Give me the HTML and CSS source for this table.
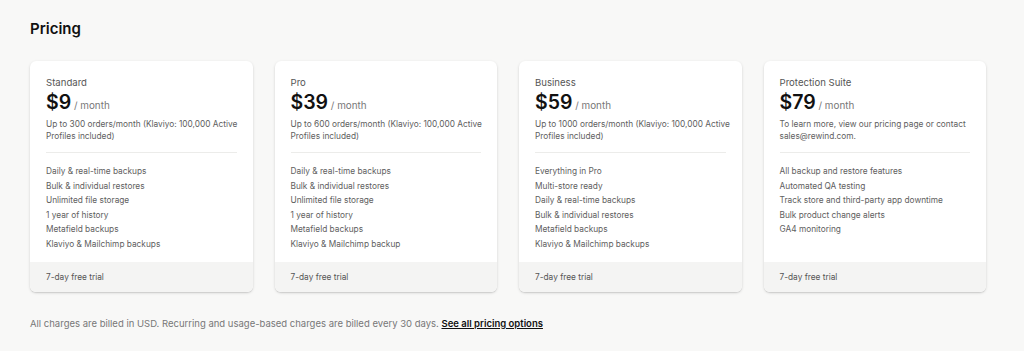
FILE: index.html
```html
<!DOCTYPE html>
<html lang="en">
<head>
    <meta charset="UTF-8">
    <title>Pricing</title>
    <link rel="stylesheet" href="styles.css">
</head>
<body>
<div class="page">
    <h1>Pricing</h1>
    <div class="plans">
        <div class="plan">
            <div class="plan-body">
                <div class="plan-name">Standard</div>
                <div class="plan-price"><strong>$9</strong> / month</div>
                <p class="plan-desc">Up to 300 orders/month (Klaviyo: 100,000 Active Profiles included)</p>
                <ul class="features">
                    <li>Daily &amp; real-time backups</li>
                    <li>Bulk &amp; individual restores</li>
                    <li>Unlimited file storage</li>
                    <li>1 year of history</li>
                    <li>Metafield backups</li>
                    <li>Klaviyo &amp; Mailchimp backups</li>
                </ul>
            </div>
            <div class="plan-foot">7-day free trial</div>
        </div>
        <div class="plan">
            <div class="plan-body">
                <div class="plan-name">Pro</div>
                <div class="plan-price"><strong>$39</strong> / month</div>
                <p class="plan-desc">Up to 600 orders/month (Klaviyo: 100,000 Active Profiles included)</p>
                <ul class="features">
                    <li>Daily &amp; real-time backups</li>
                    <li>Bulk &amp; individual restores</li>
                    <li>Unlimited file storage</li>
                    <li>1 year of history</li>
                    <li>Metafield backups</li>
                    <li>Klaviyo &amp; Mailchimp backup</li>
                </ul>
            </div>
            <div class="plan-foot">7-day free trial</div>
        </div>
        <div class="plan">
            <div class="plan-body">
                <div class="plan-name">Business</div>
                <div class="plan-price"><strong>$59</strong> / month</div>
                <p class="plan-desc">Up to 1000 orders/month (Klaviyo: 100,000 Active Profiles included)</p>
                <ul class="features">
                    <li>Everything in Pro</li>
                    <li>Multi-store ready</li>
                    <li>Daily &amp; real-time backups</li>
                    <li>Bulk &amp; individual restores</li>
                    <li>Metafield backups</li>
                    <li>Klaviyo &amp; Mailchimp backups</li>
                </ul>
            </div>
            <div class="plan-foot">7-day free trial</div>
        </div>
        <div class="plan">
            <div class="plan-body">
                <div class="plan-name">Protection Suite</div>
                <div class="plan-price"><strong>$79</strong> / month</div>
                <p class="plan-desc">To learn more, view our pricing page or contact sales@rewind.com.</p>
                <ul class="features">
                    <li>All backup and restore features</li>
                    <li>Automated QA testing</li>
                    <li>Track store and third-party app downtime</li>
                    <li>Bulk product change alerts</li>
                    <li>GA4 monitoring</li>
                </ul>
            </div>
            <div class="plan-foot">7-day free trial</div>
        </div>
    </div>
    <p class="note">
        All charges are billed in USD. Recurring and usage-based charges are billed every 30 days.
        <a href="#">See all pricing options</a>
    </p>
</div>
</body>
</html>
```

FILE: styles.css
```css
body {
  margin: 0;
  background: #f8f8f7;
  color: #1a1a1a;
  font-family: Inter, "Noto Sans", sans-serif;
}

.page {
  padding: 19px 38px 0 30px;
}

h1 {
  margin: 0 0 22px;
  font-size: 15px;
  font-weight: 600;
  line-height: 20px;
  color: #111;
}

.plans {
  display: grid;
  grid-template-columns: repeat(4, 1fr);
  gap: 22px;
}

.plan {
  display: flex;
  flex-direction: column;
  background: white;
  border-radius: 6px;
  box-shadow: rgba(0, 0, 0, 0.14) 0 1px 3px, rgba(0, 0, 0, 0.08) 0 1px 1px;
  overflow: hidden;
}

.plan-body {
  flex: 1;
  padding: 15px 16px 11px;
}

.plan-name {
  font-size: 9.6px;
  line-height: 14px;
  color: #555;
}

.plan-price {
  font-size: 9.9px;
  color: #777;
  line-height: 25px;
}

.plan-price strong {
  font-size: 19.5px;
  font-weight: 600;
  color: #111;
}

.plan-desc {
  margin: 0 -6px 0 0;
  padding-bottom: 10px;
  font-size: 8.3px;
  line-height: 12px;
  color: #606060;
}

.features {
  list-style: none;
  margin: 0;
  padding: 11px 0 0;
  border-top: 1px solid #ececea;
  font-size: 8.3px;
  line-height: 14.5px;
  color: #606060;
}

.plan-foot {
  background: #f4f4f3;
  padding: 8px 16px;
  font-size: 8.3px;
  line-height: 14px;
  color: #555;
}

.note {
  margin: 26px 0 0;
  font-size: 9.5px;
  line-height: 12px;
  color: #777;
}

.note a {
  color: #111;
  font-weight: 600;
}
```
